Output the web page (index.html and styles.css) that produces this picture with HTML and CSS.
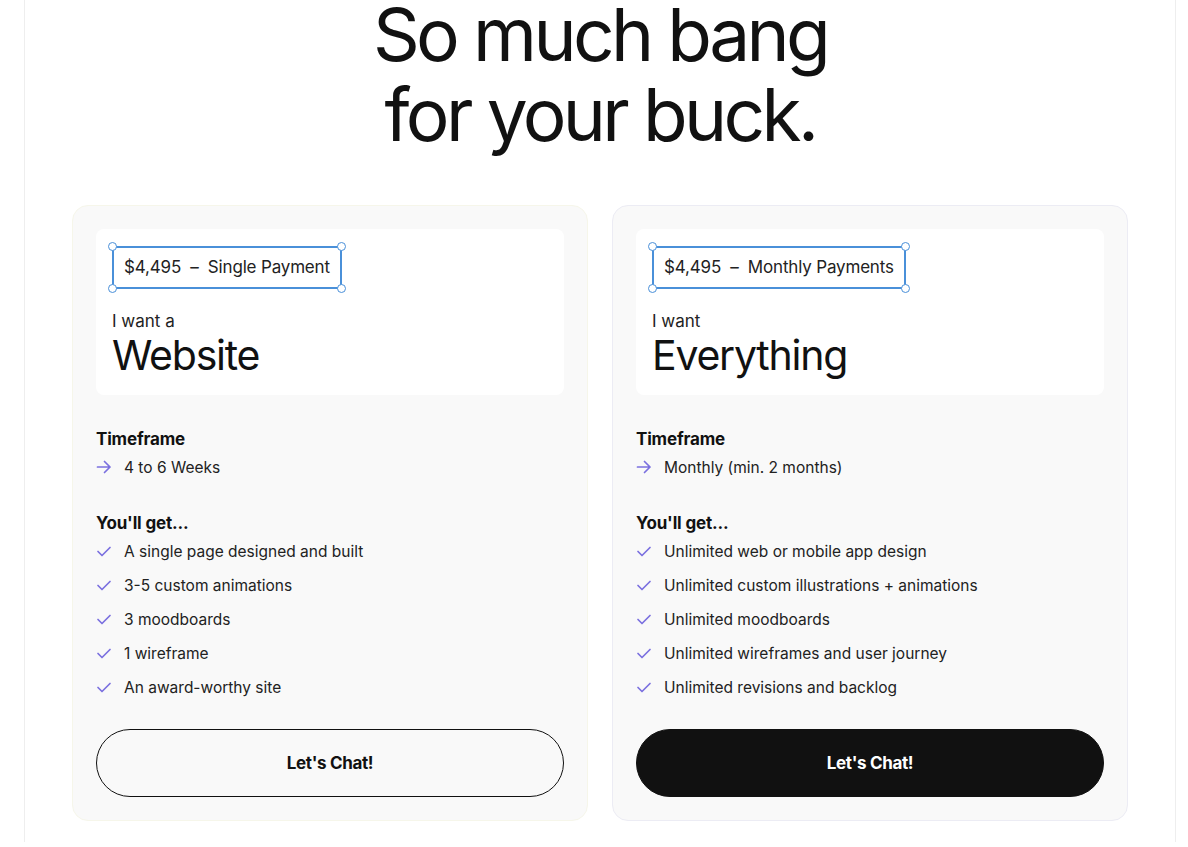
FILE: index.html
```html
<!DOCTYPE html>
<html>
<head>
  <meta charset="UTF-8">
  <title>Pricing</title>
  <link rel="stylesheet" href="styles.css">
</head>
<body>
  <div class="page">
    <h1 class="title">So much bang<br>for your buck.</h1>

    <div class="plans">
      <div class="plan plan-single">
        <div class="plan-head">
          <div class="badge">
            <span>$4,495&nbsp; –&nbsp; Single Payment</span>
            <i class="handle tl"></i><i class="handle tr"></i><i class="handle bl"></i><i class="handle br"></i>
          </div>
          <div class="want">I want a</div>
          <div class="what">Website</div>
        </div>

        <div class="section">
          <h3>Timeframe</h3>
          <ul class="list">
            <li><svg class="icon" viewBox="0 0 16 16"><path d="M1.5 8h12.5M8.5 2.5L14 8l-5.5 5.5"/></svg>4 to 6 Weeks</li>
          </ul>
        </div>

        <div class="section">
          <h3>You'll get...</h3>
          <ul class="list">
            <li><svg class="icon" viewBox="0 0 16 16"><path d="M2 8.5l4 4 8-8"/></svg>A single page designed and built</li>
            <li><svg class="icon" viewBox="0 0 16 16"><path d="M2 8.5l4 4 8-8"/></svg>3-5 custom animations</li>
            <li><svg class="icon" viewBox="0 0 16 16"><path d="M2 8.5l4 4 8-8"/></svg>3 moodboards</li>
            <li><svg class="icon" viewBox="0 0 16 16"><path d="M2 8.5l4 4 8-8"/></svg>1 wireframe</li>
            <li><svg class="icon" viewBox="0 0 16 16"><path d="M2 8.5l4 4 8-8"/></svg>An award-worthy site</li>
          </ul>
        </div>

        <button class="chat">Let's Chat!</button>
      </div>

      <div class="plan plan-monthly">
        <div class="plan-head">
          <div class="badge">
            <span>$4,495&nbsp; –&nbsp; Monthly Payments</span>
            <i class="handle tl"></i><i class="handle tr"></i><i class="handle bl"></i><i class="handle br"></i>
          </div>
          <div class="want">I want</div>
          <div class="what">Everything</div>
        </div>

        <div class="section">
          <h3>Timeframe</h3>
          <ul class="list">
            <li><svg class="icon" viewBox="0 0 16 16"><path d="M1.5 8h12.5M8.5 2.5L14 8l-5.5 5.5"/></svg>Monthly (min. 2 months)</li>
          </ul>
        </div>

        <div class="section">
          <h3>You'll get...</h3>
          <ul class="list">
            <li><svg class="icon" viewBox="0 0 16 16"><path d="M2 8.5l4 4 8-8"/></svg>Unlimited web or mobile app design</li>
            <li><svg class="icon" viewBox="0 0 16 16"><path d="M2 8.5l4 4 8-8"/></svg>Unlimited custom illustrations + animations</li>
            <li><svg class="icon" viewBox="0 0 16 16"><path d="M2 8.5l4 4 8-8"/></svg>Unlimited moodboards</li>
            <li><svg class="icon" viewBox="0 0 16 16"><path d="M2 8.5l4 4 8-8"/></svg>Unlimited wireframes and user journey</li>
            <li><svg class="icon" viewBox="0 0 16 16"><path d="M2 8.5l4 4 8-8"/></svg>Unlimited revisions and backlog</li>
          </ul>
        </div>

        <button class="chat dark">Let's Chat!</button>
      </div>
    </div>
  </div>
</body>
</html>
```

FILE: styles.css
```css
body {
  margin: 0;
  background-color: #fff;
  color: #111;
  font-family: Inter, "Noto Sans", "Liberation Sans", sans-serif;
}

.page {
  margin: 0 12px 0 24px;
  min-height: 847px;
  border-left: 1px solid #eeeeee;
  border-right: 1px solid #eeeeee;
  box-sizing: border-box;
  padding: 0 47px;
}

.title {
  margin: -5px 0 0;
  text-align: center;
  font-size: 73px;
  font-weight: 400;
  line-height: 80px;
  letter-spacing: -0.05em;
  color: #111;
}

.plans {
  display: grid;
  grid-template-columns: 1fr 1fr;
  gap: 24px;
  margin-top: 50px;
}

.plan {
  background-color: #f9f9f9;
  border: 1px solid #f6f6ea;
  border-radius: 16px;
  padding: 23px;
  display: flex;
  flex-direction: column;
}

.plan-monthly {
  border-color: #ececf4;
}

.plan-head {
  background-color: #fff;
  border-radius: 8px;
  padding: 17px 16px 16px;
  height: 166px;
  box-sizing: border-box;
}

.badge {
  position: relative;
  display: inline-block;
  border: 2px solid #4a90d9;
  padding: 9px 10px;
  font-size: 17px;
  line-height: 21px;
  color: #222;
  letter-spacing: -0.01em;
}

.handle {
  position: absolute;
  width: 7px;
  height: 7px;
  border: 1.5px solid #4a90d9;
  border-radius: 50%;
  background-color: #fff;
}

.handle.tl { left: -6px; top: -6px; }
.handle.tr { right: -6px; top: -6px; }
.handle.bl { left: -6px; bottom: -6px; }
.handle.br { right: -6px; bottom: -6px; }

.want {
  margin-top: 21px;
  font-size: 17px;
  line-height: 22px;
  color: #222;
}

.what {
  font-size: 41px;
  line-height: 46px;
  letter-spacing: -0.03em;
  color: #111;
}

.section {
  margin-top: 33px;
}

.section + .section {
  margin-top: 28px;
}

.section h3 {
  margin: 0;
  font-size: 17px;
  font-weight: 700;
  line-height: 22px;
  letter-spacing: -0.01em;
}

.list {
  list-style: none;
  margin: 0;
  padding: 0;
}

.list li {
  display: flex;
  align-items: center;
  height: 34px;
  font-size: 15.5px;
  color: #222;
}

.icon {
  width: 16px;
  height: 16px;
  margin-right: 12px;
  fill: none;
  stroke: #7b70df;
  stroke-width: 1.7;
  stroke-linecap: round;
  stroke-linejoin: round;
}

.chat {
  margin-top: 25px;
  height: 68px;
  border: 1px solid #111;
  border-radius: 34px;
  background-color: transparent;
  font-family: inherit;
  font-size: 17px;
  font-weight: 700;
  letter-spacing: -0.02em;
  color: #111;
  cursor: pointer;
}

.chat.dark {
  background-color: #111;
  color: #fff;
}
```
